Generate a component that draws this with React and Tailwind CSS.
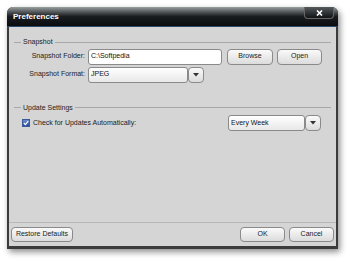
import React from "react";

const font = { fontFamily: '"Liberation Sans", Arial, sans-serif' };

function Btn({ children, className = "" }) {
  return (
    <div
      className={
        "flex items-center justify-center rounded-[4px] border border-[#8a8a8a] bg-gradient-to-b from-[#fafafa] to-[#dcdcdc] text-[7px] text-[#222] " +
        className
      }
    >
      {children}
    </div>
  );
}

function Arrow() {
  return (
    <div className="flex h-full w-[16px] items-center justify-center rounded-[4px] border border-[#8a8a8a] bg-gradient-to-b from-[#fafafa] to-[#dcdcdc]">
      <svg width="6" height="4" viewBox="0 0 6 4">
        <path d="M0 0 H6 L3 3.5 Z" fill="#333" />
      </svg>
    </div>
  );
}

function GroupTitle({ children }) {
  return (
    <div className="flex items-center">
      <div className="h-px w-[7px] bg-[#a8a8a8]" />
      <span className="px-[2px] text-[7px] text-[#222]">{children}</span>
      <div className="h-px flex-1 bg-[#a8a8a8]" />
    </div>
  );
}

export default function App() {
  return (
    <div className="h-[262px] w-[350px] bg-white pl-[7px] pt-[7px]" style={font}>
      <div className="relative flex h-[242px] w-[331px] flex-col rounded-t-[6px] bg-[#3c3c3c] shadow-[2px_3px_6px_rgba(0,0,0,0.45)]">
        <div className="flex h-[20px] items-center rounded-t-[6px] border-b border-[#2c4a6e] bg-gradient-to-b from-[#9aa0a0] via-[#1a1d20] to-[#0a0c0e] px-[6px]">
          <span className="text-[8px] font-bold text-white">Preferences</span>
        </div>
        <div className="absolute right-[4px] top-0 flex h-[12px] w-[30px] items-center justify-center rounded-b-[4px] border border-t-0 border-[#666] bg-gradient-to-b from-[#555a5c] to-[#121416]">
          <svg width="7" height="6" viewBox="0 0 7 6">
            <path d="M1 0.5 L6 5.5 M6 0.5 L1 5.5" stroke="#fff" strokeWidth="1.6" />
          </svg>
        </div>
        <div className="mx-[2px] mb-[3px] flex flex-1 flex-col bg-[#d5d5d5]">
          <div className="flex flex-1 flex-col px-[5px] pt-[10px]">
            <GroupTitle>Snapshot</GroupTitle>
            <div className="mt-[1px] flex h-[16px] items-center">
              <span className="w-[74px] pr-[3px] text-right text-[7px] text-[#222]">Snapshot Folder:</span>
              <div className="flex h-full w-[134px] items-center rounded-[3px] border border-[#8a8a8a] bg-white px-[2px] text-[7px] text-[#111]">C:\Softpedia</div>
              <Btn className="ml-[5px] h-full w-[46px] border-[#7fb8c0]">Browse</Btn>
              <Btn className="ml-[4px] h-full w-[45px]">Open</Btn>
            </div>
            <div className="mt-[2px] flex h-[16px] items-center">
              <span className="w-[74px] pr-[3px] text-right text-[7px] text-[#222]">Snapshot Format:</span>
              <div className="flex h-full w-[100px] items-center rounded-[3px] border border-[#8a8a8a] bg-gradient-to-b from-white to-[#e8e8e8] px-[2px] text-[7px] text-[#111]">JPEG</div>
              <Arrow />
            </div>
            <div className="mt-[20px]">
              <GroupTitle>Update Settings</GroupTitle>
            </div>
            <div className="mt-[2px] flex h-[16px] items-center">
              <div className="ml-[8px] flex h-[8px] w-[8px] items-center justify-center border border-[#3c5a9a] bg-gradient-to-b from-[#6a8ad0] to-[#2a4a9a]">
                <svg width="6" height="6" viewBox="0 0 6 6">
                  <path d="M0.8 3 L2.4 4.6 L5.2 1.2" stroke="#fff" strokeWidth="1.2" fill="none" />
                </svg>
              </div>
              <span className="ml-[3px] text-[7px] text-[#222]">Check for Updates Automatically:</span>
              <div className="ml-auto mr-[10px] flex h-full">
                <div className="flex h-full w-[77px] items-center rounded-[3px] border border-[#8a8a8a] bg-gradient-to-b from-white to-[#e8e8e8] px-[2px] text-[7px] text-[#111]">Every Week</div>
                <Arrow />
              </div>
            </div>
          </div>
          <div className="flex h-[24px] items-center border-t border-[#b8b8b8] px-[2px] pb-[1px]">
            <Btn className="h-[15px] w-[62px]">Restore Defaults</Btn>
            <Btn className="ml-auto h-[15px] w-[45px]">OK</Btn>
            <Btn className="ml-[4px] h-[15px] w-[45px]">Cancel</Btn>
          </div>
        </div>
      </div>
    </div>
  );
}
